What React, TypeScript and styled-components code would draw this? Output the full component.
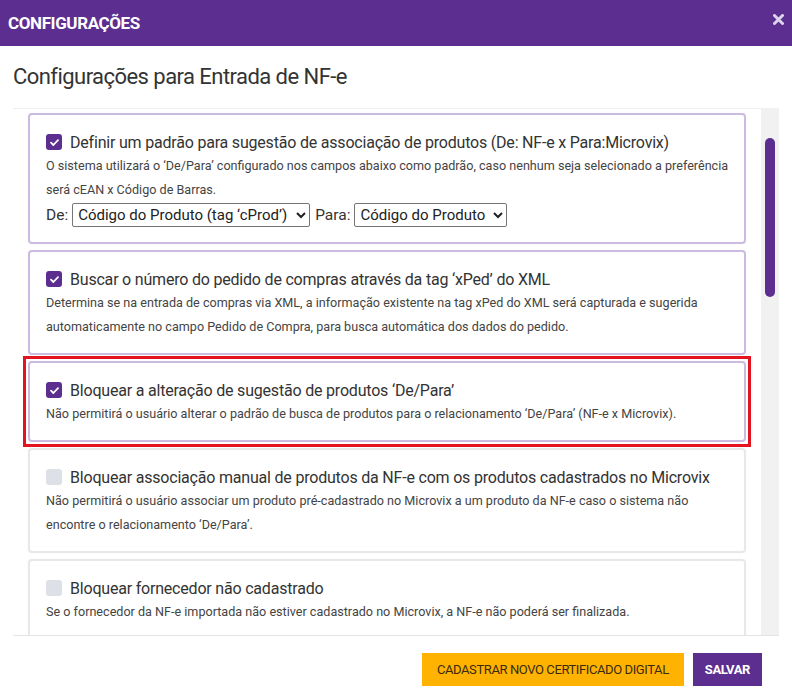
import React from 'react';
import styled, { createGlobalStyle } from 'styled-components';

const GlobalStyle = createGlobalStyle`
  body {
    margin: 0;
    font-family: Roboto, "Noto Sans", sans-serif;
    color: #333;
    background: #fff;
  }
`;

const Modal = styled.div`
  width: 792px;
  height: 697px;
  display: flex;
  flex-direction: column;
  background: #fff;
  overflow: hidden;
`;

const Header = styled.div`
  height: 46px;
  flex: none;
  display: flex;
  align-items: center;
  justify-content: space-between;
  padding: 0 8px 0 8px;
  background: #5b2e8f;
`;

const HeaderTitle = styled.h1`
  margin: 0;
  font-size: 17px;
  font-weight: 700;
  letter-spacing: -0.4px;
  color: #fff;
`;

const CloseButton = styled.button`
  border: 0;
  padding: 0;
  background: none;
  display: flex;
  margin-top: -8px;
  cursor: pointer;
`;

const Body = styled.div`
  flex: 1;
  display: flex;
  flex-direction: column;
  padding: 0 13px;
`;

const Heading = styled.h2`
  margin: 0;
  height: 62px;
  display: flex;
  align-items: center;
  padding-bottom: 2px;
  box-sizing: border-box;
  font-size: 22px;
  font-weight: 400;
  letter-spacing: -0.55px;
  color: #333;
`;

const ScrollArea = styled.div`
  height: 528px;
  display: flex;
  border-top: 1px solid #f0f0f0;
  border-bottom: 1px solid #e4e4e4;
  box-sizing: border-box;
`;

const List = styled.div`
  flex: 1;
  overflow: hidden;
  display: flex;
  flex-direction: column;
  gap: 6px;
  padding: 4px 15px 0;
`;

const Track = styled.div`
  width: 18px;
  flex: none;
  background: #f1f1f1;
  padding-top: 29px;
  display: flex;
  justify-content: center;
`;

const Thumb = styled.div`
  width: 10px;
  height: 159px;
  border-radius: 5px;
  background: #5b2e8f;
`;

const Card = styled.div<{ $checked?: boolean; $marked?: boolean }>`
  position: relative;
  flex: none;
  border: 2px solid ${p => (p.$checked ? '#cbbbe0' : '#e8e8e8')};
  border-radius: 4px;
  padding: 15px 16px 14px;
  box-shadow: 0 0 2px rgba(0, 0, 0, 0.04);

  &::after {
    content: '';
    display: ${p => (p.$marked ? 'block' : 'none')};
    position: absolute;
    inset: -7px;
    border: 3px solid #e3141f;
    pointer-events: none;
  }
`;

const TitleRow = styled.label`
  display: flex;
  align-items: center;
  gap: 8px;
  height: 24px;
  font-size: 16px;
  letter-spacing: -0.2px;
  color: #333;
  white-space: nowrap;
`;

const Check = styled.span<{ $checked?: boolean }>`
  width: 16px;
  height: 16px;
  flex: none;
  border-radius: 3px;
  background: ${p => (p.$checked ? '#5b2e8f' : '#dde0e6')};
  display: flex;
  align-items: center;
  justify-content: center;
`;

const Description = styled.p`
  margin: 0;
  font-size: 12.6px;
  line-height: 24px;
  color: #444;
`;

const DescLine = styled.span`
  display: block;
  white-space: nowrap;
`;

const SelectRow = styled.div`
  display: flex;
  align-items: center;
  gap: 3px;
  height: 26px;
  font-size: 15.5px;
  color: #333;
`;

const Select = styled.select<{ $w: number }>`
  width: ${p => p.$w}px;
  height: 24px;
  margin: 0 2px 0 1px;
  border: 1px solid #767676;
  border-radius: 2px;
  background: #fff;
  font-family: Roboto, sans-serif;
  font-size: 15px;
  color: #222;
  padding: 0 1px;
`;

const Footer = styled.div`
  flex: 1;
  display: flex;
  justify-content: flex-end;
  align-items: flex-start;
  gap: 9px;
  padding: 17px 17px 0 0;
`;

const Button = styled.button<{ $primary?: boolean }>`
  height: 33px;
  border: 0;
  padding: 0 ${p => (p.$primary ? 12 : 15)}px;
  font-family: Roboto, sans-serif;
  font-size: 13px;
  font-weight: ${p => (p.$primary ? 700 : 400)};
  letter-spacing: -0.4px;
  background: ${p => (p.$primary ? '#5b2e8f' : '#ffb300')};
  color: ${p => (p.$primary ? '#fff' : '#3a2a10')};
  cursor: pointer;
`;

const CheckMark = () => (
  <svg width="9" height="7" viewBox="0 0 9 7">
    <path d="M1 3.6 L3.4 6 L8 1.2" stroke="#fff" strokeWidth="1.8" fill="none" strokeLinecap="round" strokeLinejoin="round" />
  </svg>
);

type Option = {
  title: string;
  desc: string[];
  checked: boolean;
  marked?: boolean;
  selects?: boolean;
};

const options: Option[] = [
  {
    title: 'Definir um padrão para sugestão de associação de produtos (De: NF-e x Para:Microvix)',
    desc: [
      'O sistema utilizará o ‘De/Para’ configurado nos campos abaixo como padrão, caso nenhum seja selecionado a preferência',
      'será cEAN x Código de Barras.',
    ],
    checked: true,
    selects: true,
  },
  {
    title: 'Buscar o número do pedido de compras através da tag ‘xPed’ do XML',
    desc: [
      'Determina se na entrada de compras via XML, a informação existente na tag xPed do XML será capturada e sugerida',
      'automaticamente no campo Pedido de Compra, para busca automática dos dados do pedido.',
    ],
    checked: true,
  },
  {
    title: 'Bloquear a alteração de sugestão de produtos ‘De/Para’',
    desc: ['Não permitirá o usuário alterar o padrão de busca de produtos para o relacionamento ‘De/Para’ (NF-e x Microvix).'],
    checked: true,
    marked: true,
  },
  {
    title: 'Bloquear associação manual de produtos da NF-e com os produtos cadastrados no Microvix',
    desc: [
      'Não permitirá o usuário associar um produto pré-cadastrado no Microvix a um produto da NF-e caso o sistema não',
      'encontre o relacionamento ‘De/Para’.',
    ],
    checked: false,
  },
  {
    title: 'Bloquear fornecedor não cadastrado',
    desc: ['Se o fornecedor da NF-e importada não estiver cadastrado no Microvix, a NF-e não poderá ser finalizada.'],
    checked: false,
  },
];

export default function App() {
  return (
    <>
      <GlobalStyle />
      <Modal>
        <Header>
          <HeaderTitle>CONFIGURAÇÕES</HeaderTitle>
          <CloseButton aria-label="Fechar">
            <svg width="11" height="11" viewBox="0 0 11 11">
              <path d="M1.5 1.5 L9.5 9.5 M9.5 1.5 L1.5 9.5" stroke="#ddd3ea" strokeWidth="3" strokeLinecap="round" />
            </svg>
          </CloseButton>
        </Header>
        <Body>
          <Heading>Configurações para Entrada de NF-e</Heading>
          <ScrollArea>
            <List>
              {options.map(o => (
                <Card key={o.title} $checked={o.checked} $marked={o.marked}>
                  <TitleRow>
                    <Check $checked={o.checked}>{o.checked && <CheckMark />}</Check>
                    {o.title}
                  </TitleRow>
                  <Description>
                    {o.desc.map(line => (
                      <DescLine key={line}>{line}</DescLine>
                    ))}
                  </Description>
                  {o.selects && (
                    <SelectRow>
                      De:
                      <Select $w={238} defaultValue="cprod">
                        <option value="cprod">Código do Produto (tag ‘cProd’)</option>
                        <option value="cean">cEAN</option>
                      </Select>
                      Para:
                      <Select $w={153} defaultValue="codigo">
                        <option value="codigo">Código do Produto</option>
                        <option value="barras">Código de Barras</option>
                      </Select>
                    </SelectRow>
                  )}
                </Card>
              ))}
            </List>
            <Track>
              <Thumb />
            </Track>
          </ScrollArea>
          <Footer>
            <Button>CADASTRAR NOVO CERTIFICADO DIGITAL</Button>
            <Button $primary>SALVAR</Button>
          </Footer>
        </Body>
      </Modal>
    </>
  );
}
